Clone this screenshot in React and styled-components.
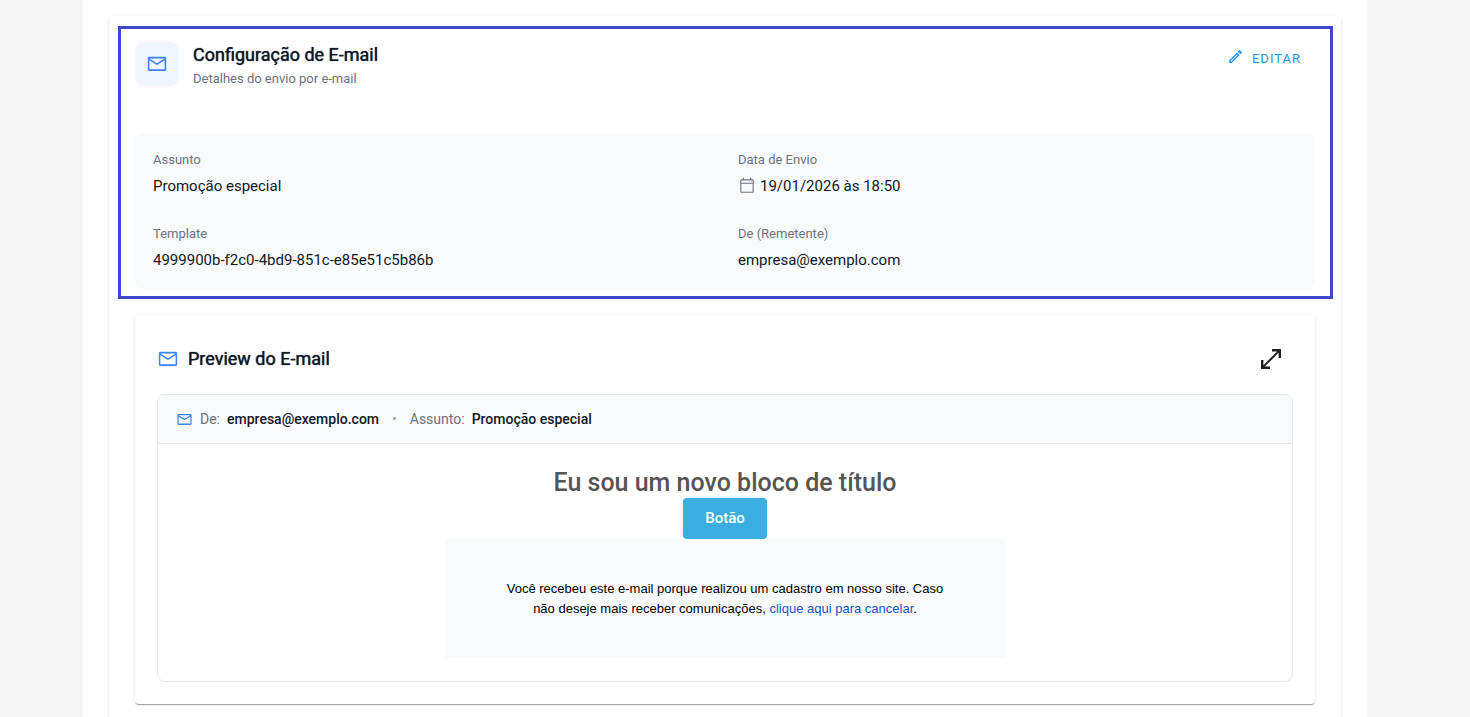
import React from 'react'
import styled, { createGlobalStyle } from 'styled-components'

const GlobalStyle = createGlobalStyle`
  * {
    box-sizing: border-box;
  }
  body {
    margin: 0;
    background: #f5f5f5;
    color: #111827;
    font-family: Roboto, sans-serif;
  }
  h1, h2, p, dl, dd {
    margin: 0;
  }
`

const Page = styled.main`
  min-height: 100vh;
  margin: 0 103px 0 83px;
  padding: 16px 26px 0;
  background: #fff;
`

const Card = styled.section`
  min-height: calc(100vh - 16px);
  padding: 10px 8px 24px 9px;
  border-radius: 4px;
  box-shadow: 0 2px 1px -1px rgba(0, 0, 0, 0.2), 0 1px 1px 0 rgba(0, 0, 0, 0.14), 0 1px 3px 0 rgba(0, 0, 0, 0.12);
`

const Highlight = styled.div`
  padding: 13px 15px 7px 14px;
  border: 3px solid #3f48cc;
`

const Row = styled.div`
  display: flex;
  align-items: ${(props) => props.$align || 'center'};
  gap: ${(props) => props.$gap || 0}px;
`

const ConfigHeader = styled.header`
  display: flex;
  justify-content: space-between;
  align-items: flex-start;
  height: 91px;
`

const IconBox = styled.div`
  display: flex;
  align-items: center;
  justify-content: center;
  width: 44px;
  height: 44px;
  border-radius: 8px;
  background: #eff6ff;
`

const Title = styled.h2`
  font-size: 18px;
  font-weight: 400;
  line-height: 26px;
  text-shadow: 0 0 1px currentColor;
`

const Subtitle = styled.p`
  font-size: 13px;
  line-height: 22px;
  color: #6b7280;
`

const EditButton = styled.button`
  display: flex;
  align-items: center;
  gap: 8px;
  height: 32px;
  padding: 0 14px;
  border: 0;
  background: none;
  color: #2196f3;
  font-family: inherit;
  font-size: 13px;
  letter-spacing: 1px;
  text-transform: uppercase;
  cursor: pointer;
  svg {
    margin-bottom: 3px;
  }
`

const Details = styled.dl`
  display: grid;
  grid-template-columns: 1fr 1fr;
  gap: 26px;
  padding: 17px 18px;
  border-radius: 8px;
  background: #f9fafc;
`

const Label = styled.dt`
  font-size: 13px;
  line-height: 20px;
  color: #6b7280;
`

const Value = styled.dd`
  display: flex;
  align-items: center;
  gap: 4px;
  margin-top: 4px;
  font-size: 15px;
  line-height: 24px;
`

const PreviewCard = styled.section`
  margin: 16px 18px 0 17px;
  padding: 24px 22px 22px;
  border-radius: 4px;
  box-shadow: 0 2px 1px -1px rgba(0, 0, 0, 0.2), 0 1px 1px 0 rgba(0, 0, 0, 0.14), 0 1px 3px 0 rgba(0, 0, 0, 0.12);
`

const PreviewHeader = styled.header`
  display: flex;
  justify-content: space-between;
  align-items: center;
  height: 40px;
  margin-bottom: 15px;
`

const ExpandButton = styled.button`
  display: flex;
  align-items: center;
  justify-content: center;
  width: 44px;
  height: 40px;
  padding: 0;
  border: 0;
  background: none;
  color: #212121;
  cursor: pointer;
`

const Frame = styled.div`
  overflow: hidden;
  border: 1px solid #e5e7eb;
  border-radius: 8px;
`

const Meta = styled.div`
  display: flex;
  align-items: center;
  gap: 7px;
  height: 49px;
  padding: 0 18px;
  border-bottom: 1px solid #e5e7eb;
  background: #f9fafc;
  font-size: 14px;
  color: #6b7280;
  strong {
    color: #111827;
    font-weight: 500;
  }
`

const Dot = styled.span`
  padding: 0 6px;
  color: #9ca3af;
`

const Email = styled.article`
  display: flex;
  flex-direction: column;
  align-items: center;
  padding: 23px 24px;
`

const EmailTitle = styled.h1`
  color: #555;
  font-size: 25px;
  font-weight: 500;
  line-height: 31px;
`

const EmailButton = styled.button`
  height: 41px;
  padding: 0 22px 2px;
  border: 0;
  border-radius: 4px;
  background: #3aaee0;
  color: #fff;
  font-family: inherit;
  font-size: 15px;
  font-weight: 500;
`

const Unsubscribe = styled.p`
  width: 100%;
  max-width: 561px;
  padding: 40px 56px 39px;
  background: #f9fafc;
  color: #000;
  font-family: 'Liberation Sans', Arial, sans-serif;
  font-size: 13px;
  line-height: 20px;
  text-align: center;
  a {
    color: #1155cc;
    text-decoration: none;
  }
`

const icons = {
  email:
    'M3.6 4.2H20.4C21.4 4.2 22 4.8 22 5.8V18C22 19 21.4 19.6 20.4 19.6H3.6C2.6 19.6 2 19 2 18V5.8C2 4.8 2.6 4.2 3.6 4.2M20.3 6H3.7L12 11.1L20.3 6M3.7 17.8H20.3V8L12 13L3.7 8V17.8Z',
  pencil:
    'M14.06,9L15,9.94L5.92,19H5V18.08L14.06,9M17.66,3C17.41,3 17.15,3.1 16.96,3.29L15.13,5.12L18.88,8.87L20.71,7.04C21.1,6.65 21.1,6 20.71,5.63L18.37,3.29C18.17,3.09 17.92,3 17.66,3M14.06,6.19L3,17.25V21H6.75L17.81,9.94L14.06,6.19Z',
  calendar:
    'M19 3H17.7V1H16V3H8V1H6.3V3H5C3.7 3 3 3.7 3 5V19.5C3 20.4 3.7 21 5 21H19C20.3 21 21 20.4 21 19.5V5C21 3.7 20.3 3 19 3M19.5 19.5H4.5V9H19.5V19.5M19.5 7.5H4.5V4.5H19.5V7.5Z',
  expand:
    'M22 2V11H19.6V5.8L5.8 19.6H11V22H2V13H4.4V18.2L18.2 4.4H13V2H22Z',
}

function Icon({ name, size, color }) {
  return (
    <svg width={size} height={size} viewBox='0 0 24 24' fill={color || 'currentColor'} fillRule='evenodd' aria-hidden='true'>
      <path d={icons[name]} />
    </svg>
  )
}

function Field({ label, icon, children }) {
  return (
    <div>
      <Label>{label}</Label>
      <Value>
        {icon && <Icon name={icon} size={18} color='#6b7280' />}
        {children}
      </Value>
    </div>
  )
}

function App() {
  return (
    <>
      <GlobalStyle />
      <Page>
        <Card>
          <Highlight>
            <ConfigHeader>
              <Row $gap={14} $align='flex-start'>
                <IconBox>
                  <Icon name='email' size={22} color='#3b82f6' />
                </IconBox>
                <div>
                  <Title>Configuração de E-mail</Title>
                  <Subtitle>Detalhes do envio por e-mail</Subtitle>
                </div>
              </Row>
              <EditButton type='button'>
                <Icon name='pencil' size={17} />
                Editar
              </EditButton>
            </ConfigHeader>
            <Details>
              <Field label='Assunto'>Promoção especial</Field>
              <Field label='Data de Envio' icon='calendar'>19/01/2026 às 18:50</Field>
              <Field label='Template'>4999900b-f2c0-4bd9-851c-e85e51c5b86b</Field>
              <Field label='De (Remetente)'>empresa@exemplo.com</Field>
            </Details>
          </Highlight>
          <PreviewCard>
            <PreviewHeader>
              <Row $gap={9}>
                <Icon name='email' size={22} color='#3b82f6' />
                <Title>Preview do E-mail</Title>
              </Row>
              <ExpandButton type='button' aria-label='Expandir'>
                <Icon name='expand' size={24} />
              </ExpandButton>
            </PreviewHeader>
            <Frame>
              <Meta>
                <Icon name='email' size={17} color='#3b82f6' />
                <span>De:</span>
                <strong>empresa@exemplo.com</strong>
                <Dot>•</Dot>
                <span>Assunto:</span>
                <strong>Promoção especial</strong>
              </Meta>
              <Email>
                <EmailTitle>Eu sou um novo bloco de título</EmailTitle>
                <EmailButton type='button'>Botão</EmailButton>
                <Unsubscribe>
                  Você recebeu este e-mail porque realizou um cadastro em nosso site. Caso não deseje mais receber
                  comunicações, <a href='#cancelar'>clique aqui para cancelar</a>.
                </Unsubscribe>
              </Email>
            </Frame>
          </PreviewCard>
        </Card>
      </Page>
    </>
  )
}

export default App
